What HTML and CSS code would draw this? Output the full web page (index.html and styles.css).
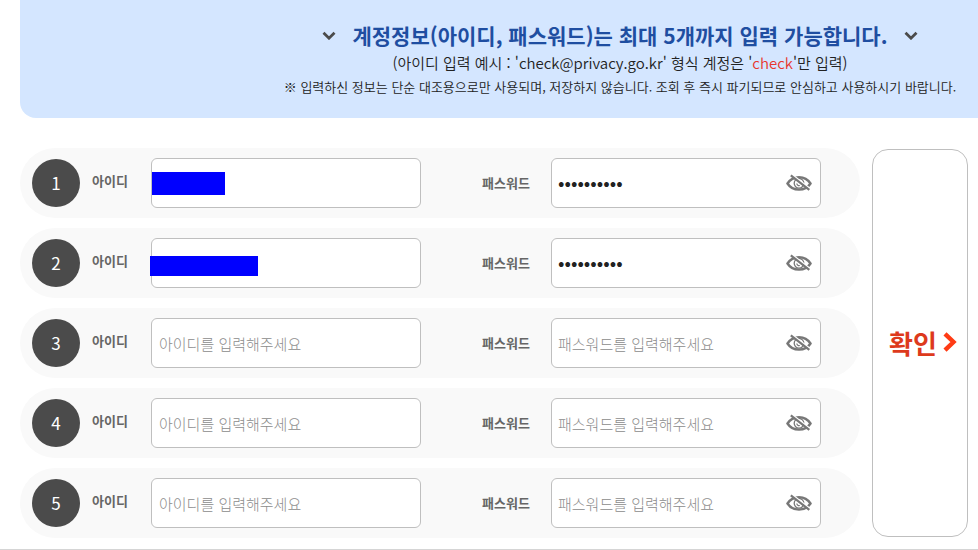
FILE: index.html
```html
<!DOCTYPE html>
<html lang="ko">
<head>
  <meta charset="UTF-8" />
  <meta name="viewport" content="width=device-width, initial-scale=1.0"/>
  <title>계정정보 입력</title>
  <link rel="stylesheet" href="styles.css">
</head>
<body>
  <svg width="0" height="0" class="defs">
    <symbol id="eye-off" viewBox="0 0 26 18">
      <path d="M1.500 9.500C4 5.500 8 3.200 13 3.200s9 2.300 11.500 6.300C22 13.500 18 15.600 13 15.600S4 13.500 1.500 9.500z" fill="none" stroke="#777" stroke-width="2.400"/>
      <circle cx="13" cy="9.300" r="4.800" fill="none" stroke="#777" stroke-width="1.300"/>
      <path d="M10.800 9.500a2.300 2.300 0 0 0 3 2" fill="none" stroke="#777" stroke-width="1.200"/>
      <path d="M6.500 .8l18 14" stroke="#fff" stroke-width="1.500"/>
      <path d="M4.800 1.300l18.500 14.500" stroke="#777" stroke-width="2.200"/>
    </symbol>
    <symbol id="chevron" viewBox="0 0 14 10">
      <path d="M1.500 2.800L7 8.200l5.500-5.400" fill="none" stroke="#4b4b4b" stroke-width="2.800"/>
    </symbol>
  </svg>

  <header class="guide">
    <h2><svg class="chevron"><use href="#chevron"/></svg>계정정보(아이디, 패스워드)는 최대 5개까지 입력 가능합니다.<svg class="chevron"><use href="#chevron"/></svg></h2>
    <p class="example">(아이디 입력 예시 : 'check@privacy.go.kr' 형식 계정은 '<em>check</em>'만 입력)</p>
    <p class="notice">※ 입력하신 정보는 단순 대조용으로만 사용되며, 저장하지 않습니다. 조회 후 즉시 파기되므로 안심하고 사용하시기 바랍니다.</p>
  </header>

  <form class="accounts">
    <div class="rows">
      <div class="row">
        <span class="num">1</span>
        <label class="id-label" for="id1">아이디</label>
        <div class="field"><input type="text" id="id1"><span class="mask mask-short"></span></div>
        <label class="pw-label" for="pw1">패스워드</label>
        <div class="field">
          <input type="password" id="pw1" class="filled" value="password12">
          <button type="button" class="eye" aria-label="패스워드 표시"><svg><use href="#eye-off"/></svg></button>
        </div>
      </div>
      <div class="row">
        <span class="num">2</span>
        <label class="id-label" for="id2">아이디</label>
        <div class="field"><input type="text" id="id2"><span class="mask mask-long"></span></div>
        <label class="pw-label" for="pw2">패스워드</label>
        <div class="field">
          <input type="password" id="pw2" class="filled" value="password12">
          <button type="button" class="eye" aria-label="패스워드 표시"><svg><use href="#eye-off"/></svg></button>
        </div>
      </div>
      <div class="row">
        <span class="num">3</span>
        <label class="id-label" for="id3">아이디</label>
        <div class="field"><input type="text" id="id3" placeholder="아이디를 입력해주세요"></div>
        <label class="pw-label" for="pw3">패스워드</label>
        <div class="field">
          <input type="password" id="pw3" placeholder="패스워드를 입력해주세요">
          <button type="button" class="eye" aria-label="패스워드 표시"><svg><use href="#eye-off"/></svg></button>
        </div>
      </div>
      <div class="row">
        <span class="num">4</span>
        <label class="id-label" for="id4">아이디</label>
        <div class="field"><input type="text" id="id4" placeholder="아이디를 입력해주세요"></div>
        <label class="pw-label" for="pw4">패스워드</label>
        <div class="field">
          <input type="password" id="pw4" placeholder="패스워드를 입력해주세요">
          <button type="button" class="eye" aria-label="패스워드 표시"><svg><use href="#eye-off"/></svg></button>
        </div>
      </div>
      <div class="row">
        <span class="num">5</span>
        <label class="id-label" for="id5">아이디</label>
        <div class="field"><input type="text" id="id5" placeholder="아이디를 입력해주세요"></div>
        <label class="pw-label" for="pw5">패스워드</label>
        <div class="field">
          <input type="password" id="pw5" placeholder="패스워드를 입력해주세요">
          <button type="button" class="eye" aria-label="패스워드 표시"><svg><use href="#eye-off"/></svg></button>
        </div>
      </div>
    </div>
    <button type="submit" class="confirm">확인<svg viewBox="0 0 14 20"><path d="M2 1.800L10.500 10 2 18.200" fill="none" stroke="#ff3b14" stroke-width="4.400"/></svg></button>
  </form>
</body>
</html>
```

FILE: styles.css
```css
* {
  box-sizing: border-box;
}
body {
  margin: 0;
  font-family: "Noto Sans CJK KR", "Noto Sans", sans-serif;
  color: #222;
  background: #fff;
}
.defs {
  position: absolute;
}
.guide {
  margin-left: 20px;
  padding: 19px 0 19px 242px;
  background: #d4e6ff;
  border-bottom-left-radius: 16px;
  text-align: center;
  white-space: nowrap;
}
.guide h2 {
  display: flex;
  align-items: center;
  justify-content: center;
  gap: 16px;
  margin: 0;
  font-size: 21px;
  font-weight: 700;
  line-height: 32px;
  color: #1f4ea1;
}
.chevron {
  width: 14px;
  height: 10px;
}
.guide p {
  margin: 0;
}
.guide .example {
  font-size: 15px;
  font-weight: 350;
  line-height: 24px;
}
.example em {
  font-style: normal;
  color: #e8362d;
}
.guide .notice {
  font-size: 13px;
  font-weight: 350;
  line-height: 24px;
}
.accounts {
  display: flex;
  gap: 12px;
  padding: 30px 10px 11px 20px;
  border-bottom: 1px solid #d5d5d5;
}
.rows {
  flex: 1;
  display: flex;
  flex-direction: column;
  gap: 10px;
}
.row {
  display: flex;
  align-items: center;
  padding: 10px 39px 10px 12px;
  background: #f9f9f9;
  border-radius: 35px;
}
.num {
  width: 48px;
  height: 48px;
  border-radius: 50%;
  background: #4b4b4b;
  color: #fff;
  font-size: 17px;
  line-height: 48px;
  text-align: center;
}
.row label {
  font-size: 13px;
  font-weight: 700;
  color: #666;
}
.id-label {
  width: 71px;
  padding: 0 0 6px 12px;
}
.pw-label {
  width: 130px;
  padding: 0 0 2px 61px;
}
.field {
  position: relative;
  flex: 1;
}
.field input {
  display: block;
  width: 100%;
  height: 50px;
  padding: 0 7px;
  border: 1px solid #bfbfbf;
  border-radius: 6px;
  background: #fff;
  font-family: inherit;
  font-size: 15px;
  color: #222;
}
.field input[type="password"] {
  padding: 0 6px;
}
.field input.filled {
  padding-bottom: 4px;
  font-size: 19px;
}
.field input::placeholder {
  font-weight: 300;
  color: #8c8c8c;
}
.eye {
  position: absolute;
  top: 16px;
  right: 9px;
  padding: 0;
  border: 0;
  background: none;
}
.eye svg {
  display: block;
  width: 26px;
  height: 18px;
}
.mask {
  position: absolute;
  background: #00f;
}
.mask-short {
  top: 14px;
  left: 1px;
  width: 73px;
  height: 23px;
}
.mask-long {
  top: 18px;
  left: -1px;
  width: 108px;
  height: 20px;
}
.confirm {
  display: flex;
  align-items: center;
  justify-content: center;
  gap: 6px;
  width: 96px;
  margin: 1px 0;
  padding: 0 0 2px 6px;
  border: 1px solid #bfbfbf;
  border-radius: 16px;
  background: #fff;
  font-family: inherit;
  font-size: 26px;
  font-weight: 700;
  color: #dd3a1c;
}
.confirm svg {
  width: 14px;
  height: 20px;
}
```
